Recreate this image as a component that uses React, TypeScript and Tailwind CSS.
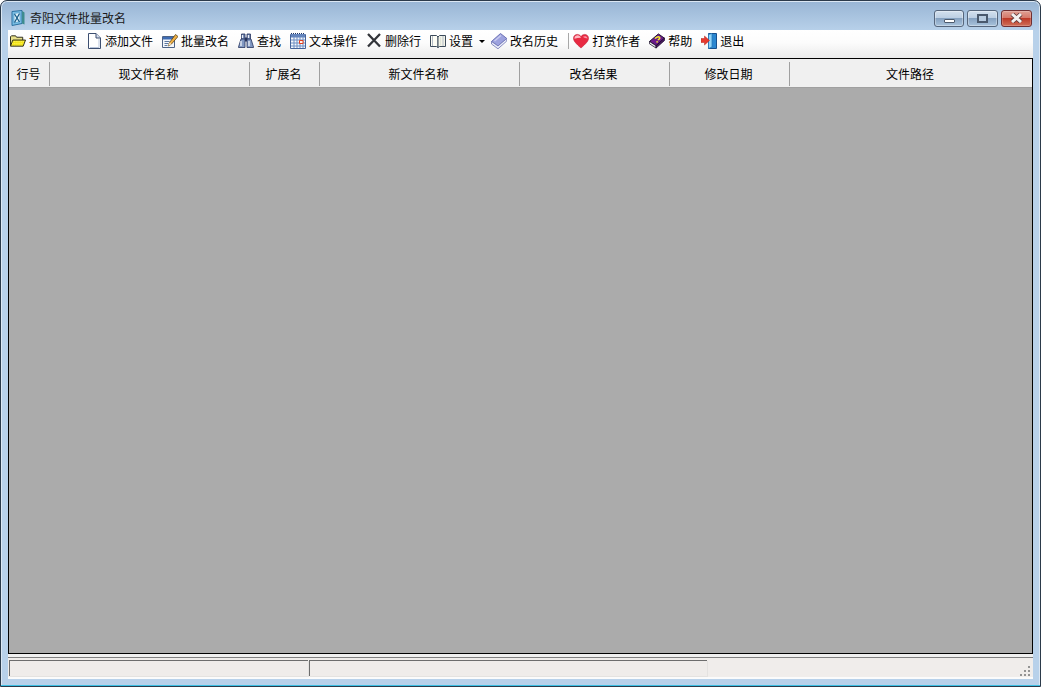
const columns = [
  { name: '行号', width: 'w-[40px]' },
  { name: '现文件名称', width: 'w-[200px]' },
  { name: '扩展名', width: 'w-[70px]' },
  { name: '新文件名称', width: 'w-[200px]' },
  { name: '改名结果', width: 'w-[150px]' },
  { name: '修改日期', width: 'w-[120px]' },
  { name: '文件路径', width: 'flex-1' },
];

function AppIcon() {
  return (
    <svg width="14" height="16" viewBox="0 0 14 16" className="shrink-0">
      <path d="M1 1.500L11 .5v13l-10 2z" fill="#7cc0e6" stroke="#2a6f9f" />
      <path d="M3 3.500l6-1v9l-6 1.500z" fill="#e0f3fb" stroke="#4b97c6" strokeWidth=".7" />
      <path d="M3.500 12.500l5-9M3.500 4l5 8" stroke="#1a5c88" strokeWidth="1.300" fill="none" />
      <path d="M11 1l2.500 1.500v12L11 13.500z" fill="#3d8c8f" />
    </svg>
  );
}

function FolderIcon() {
  return (
    <svg width="17" height="16" viewBox="0 0 17 16">
      <defs>
        <pattern id="folder-dots" width="2" height="2" patternUnits="userSpaceOnUse">
          <rect width="2" height="2" fill="#f2e414" />
          <rect width="1" height="1" fill="#fff36a" />
        </pattern>
      </defs>
      <path d="M.5 13V3.500l1-1h4.500l1 1.500h6.500v3" fill="#e8e08a" stroke="#26261a" />
      <path d="M.5 13.500l2.500-6.500h13.500l-2.500 6.500z" fill="url(#folder-dots)" stroke="#26261a" />
    </svg>
  );
}

function PageIcon() {
  return (
    <svg width="13" height="16" viewBox="0 0 13 16">
      <path d="M.5.5h7.500l4.500 4.500v10.500H.5z" fill="#fff" stroke="#3d4f70" />
      <path d="M8 .5v4.500h4.500" fill="#d5deee" stroke="#3d4f70" />
      <path d="M11 6v8.500H2" fill="none" stroke="#b9c6dc" />
    </svg>
  );
}

function EditIcon() {
  return (
    <svg width="16" height="16" viewBox="0 0 16 16">
      <path d="M.5 3.500h12v11H.5z" fill="#f4f7fb" stroke="#4d6386" />
      <path d="M1 4h11v2.500H1z" fill="#3f6cb3" />
      <path d="M2.500 8.500h5M2.500 10.500h4M2.500 12.500h3" stroke="#5d78a0" />
      <path d="M6.500 13l1-3.500L13.500 1.500 16 3.500 9.500 11z" fill="#f0b044" stroke="#5c4418" strokeWidth=".8" />
      <path d="M6.500 13l1-3.500 2 1.500z" fill="#fbe6c2" />
    </svg>
  );
}

function BinocularsIcon() {
  return (
    <svg width="16" height="16" viewBox="0 0 16 16">
      <path d="M3.500 1h3.500v6H3.500zM9 1h3.500v6H9z" fill="#6d82ad" stroke="#26345e" strokeWidth=".8" />
      <path d="M.5 14l2.500-8h4v8.500H.5zM9 14.500V6h4l2.500 8v.5z" fill="#8198c2" stroke="#26345e" strokeWidth=".8" />
      <path d="M7 4.500h2v4H7z" fill="#26345e" />
      <path d="M4.500 2v3M10.500 2v3M3 8v5M11 8v5" stroke="#eef2f9" strokeWidth="1.300" />
    </svg>
  );
}

function CalendarIcon() {
  return (
    <svg width="16" height="16" viewBox="0 0 16 16">
      <path d="M.5 1.500h15v14H.5z" fill="#f4f7fc" stroke="#45639a" />
      <path d="M1 1h14v3.500H1z" fill="#6384bc" />
      <path d="M1 .5h14" stroke="#1f3564" strokeDasharray="1 1" />
      <path d="M4 4v11M7 4v11M10 4v11M13 4v11M1 7h14M1 10h14M1 13h14" stroke="#6f8ec2" />
      <path d="M9.500 7.500h3.500v3H9.500z" fill="#fff3ee" stroke="#e2401f" />
    </svg>
  );
}

function CrossIcon() {
  return (
    <svg width="16" height="16" viewBox="0 0 16 16">
      <path d="M2 1l12 12.500M14 1L2 13.500" stroke="#33353a" strokeWidth="2.300" />
    </svg>
  );
}

function OpenBookIcon() {
  return (
    <svg width="16" height="16" viewBox="0 0 16 16">
      <path d="M.5 2.500h6l1.500 1.500v10.500l-1.500-1H.5z" fill="#fdfdf5" stroke="#3b4a5a" />
      <path d="M15.500 2.500h-6L8 4v10.500l1.500-1h6z" fill="#f2f3e8" stroke="#3b4a5a" />
      <path d="M2.500 3v10M13 3v10" stroke="#b4bcc6" />
      <path d="M10.500 4v8" stroke="#dfe3d8" />
    </svg>
  );
}

function BlueBookIcon() {
  return (
    <svg width="16" height="16" viewBox="0 0 16 16">
      <path d="M.5 8.500L9.500.5 15.800 5.500 7 13z" fill="#9da2de" stroke="#6d72b4" />
      <path d="M.5 8.500L7 13l8.800-7.500v2.500L7 15.800.5 11z" fill="#eceefa" stroke="#6d72b4" strokeWidth=".8" />
      <path d="M3.500 8L10 2.500" stroke="#c9cbf0" strokeWidth="1.500" />
    </svg>
  );
}

function HeartIcon() {
  return (
    <svg width="17" height="16" viewBox="0 0 17 16">
      <path d="M8.500 15.500C3 10.500.5 8 .5 5 .5 2.500 2.500 1 4.500 1c2 0 3.200 1 4 2.300C9.300 2 10.500 1 12.500 1c2 0 4 1.500 4 4 0 3-2.500 5.500-8 10.500z" fill="#e82a42" stroke="#c0243b" strokeWidth=".6" />
      <path d="M1.500 5.500C1.500 3.200 3.300 2 5 2c1.600 0 2.800 1 3.500 2.500-2.500.2-4.800.5-7 1z" fill="#ffb9c3" />
      <path d="M10.500 3.500c1.500-1 4.500-1 5 1.800-1.800 0-3.600-.8-5-1.800z" fill="#ff93a3" />
    </svg>
  );
}

function HelpBookIcon() {
  return (
    <svg width="17" height="16" viewBox="0 0 17 16">
      <path d="M.5 8.500L10 .5l6.500 4.500-9 8z" fill="#6a1a8a" stroke="#1a0d28" />
      <path d="M.5 8.500l7 4.500v2.500l-7-4.500z" fill="#f2eff4" stroke="#1a0d28" strokeWidth=".8" />
      <path d="M7.500 15.500l9-8V5L7.500 13z" fill="#4b1563" stroke="#1a0d28" strokeWidth=".8" />
      <path d="M6.500 5.500c1.200-2 3.800-2.500 4.800-1.300.7 1-.5 2-2 2.500" fill="none" stroke="#f6ec2e" strokeWidth="1.600" />
      <path d="M8 8.500l1.200.9" stroke="#f6ec2e" strokeWidth="1.600" />
    </svg>
  );
}

function ExitIcon() {
  return (
    <svg width="16" height="16" viewBox="0 0 16 16">
      <path d="M7.500.5h8v15h-8z" fill="#2a86d0" stroke="#174f8c" />
      <path d="M7.500 1.500L11 .5v13.500l-3.500 1.500z" fill="#93d4f7" stroke="#2273b3" strokeWidth=".7" />
      <path d="M0 5.500h3.500V3L8.500 7.500 3.500 12V9.500H0z" fill="#e8392e" stroke="#b0281e" strokeWidth=".5" />
    </svg>
  );
}

function ToolItem({ icon, label }: { icon: React.ReactNode; label: string }) {
  return (
    <div className="flex items-center gap-[3px]">
      <span className="flex w-[16px] justify-center">{icon}</span>
      <span>{label}</span>
    </div>
  );
}

export default function App() {
  return (
    <div className="flex h-[687px] w-[1041px] flex-col overflow-hidden rounded-t-[7px] border border-[#2b3a4a] bg-[linear-gradient(to_bottom,#98b5d4_0px,#b8d1ea_30px,#b8d1ea_100%)] font-['Noto_Sans_CJK_SC',sans-serif] text-[12px] text-black shadow-[inset_0_0_0_1px_#dbe7f3]">
      {/* Title bar */}
      <div className="flex h-[29px] shrink-0 items-center justify-between pl-[10px] pr-[8px] pt-[5px]">
        <div className="flex items-center gap-[5px]">
          <AppIcon />
          <span className="leading-none text-[#1a1a1a]">奇阳文件批量改名</span>
        </div>
        <div className="flex gap-[3px]">
          <button className="flex h-[17px] w-[30px] items-center justify-center rounded-[3px] border border-[#56667c] bg-[linear-gradient(to_bottom,#d3e0ee_0%,#bccfe4_45%,#86a2c1_50%,#a9c3dc_100%)] shadow-[inset_0_0_0_1px_#ffffff55]">
            <span className="mt-[5px] h-[4px] w-[11px] rounded-[1px] border border-[#4d5b6e] bg-white" />
          </button>
          <button className="flex h-[17px] w-[31px] items-center justify-center rounded-[3px] border border-[#56667c] bg-[linear-gradient(to_bottom,#d3e0ee_0%,#bccfe4_45%,#86a2c1_50%,#a9c3dc_100%)] shadow-[inset_0_0_0_1px_#ffffff55]">
            <span className="h-[9px] w-[11px] border-2 border-[#4a596d] bg-[#b9cce0]" />
          </button>
          <button className="flex h-[17px] w-[31px] items-center justify-center rounded-[3px] border border-[#6f2f32] bg-[linear-gradient(to_bottom,#dfa094_0%,#d6796a_45%,#bd3a28_50%,#cf6f58_100%)] shadow-[inset_0_0_0_1px_#ffffff33]">
            <svg width="13" height="10" viewBox="0 0 13 10">
              <path d="M2 1l9 8M11 1L2 9" stroke="#5f3a3a" strokeWidth="4.500" />
              <path d="M2 1l9 8M11 1L2 9" stroke="#f4f1ef" strokeWidth="3" />
            </svg>
          </button>
        </div>
      </div>

      {/* Client area */}
      <div className="mx-[7px] flex min-h-0 flex-1 flex-col bg-[#f0f0f0]">
        <div className="flex h-[28px] shrink-0 items-center gap-[9px] bg-[linear-gradient(to_bottom,#ffffff_0%,#fcfcfc_45%,#ebebeb_100%)] pb-[6px] pl-[2px]">
          <ToolItem icon={<FolderIcon />} label="打开目录" />
          <ToolItem icon={<PageIcon />} label="添加文件" />
          <ToolItem icon={<EditIcon />} label="批量改名" />
          <ToolItem icon={<BinocularsIcon />} label="查找" />
          <ToolItem icon={<CalendarIcon />} label="文本操作" />
          <ToolItem icon={<CrossIcon />} label="删除行" />
          <div className="flex items-center">
            <ToolItem icon={<OpenBookIcon />} label="设置" />
            <span className="ml-[6px] mr-[-3px] h-0 w-0 border-x-[3px] border-t-[3px] border-x-transparent border-t-black" />
          </div>
          <ToolItem icon={<BlueBookIcon />} label="改名历史" />
          <span className="ml-[1px] mr-[-5px] h-[16px] w-px bg-[#a8a8a8]" />
          <ToolItem icon={<HeartIcon />} label="打赏作者" />
          <ToolItem icon={<HelpBookIcon />} label="帮助" />
          <ToolItem icon={<ExitIcon />} label="退出" />
        </div>

        {/* Grid */}
        <div className="flex min-h-0 flex-1 flex-col border border-black bg-[#f0f0f0] pt-[1px]">
          <div className="flex h-[28px] shrink-0 items-center border-b border-[#a0a0a0] pl-[1px]">
            {columns.map((col, i) => (
              <div
                key={col.name}
                className={`flex h-[24px] items-center justify-center pr-[2px] ${col.width} ${i < columns.length - 1 ? 'border-r border-[#a0a0a0]' : ''}`}
              >
                {col.name}
              </div>
            ))}
          </div>
          <div className="flex-1 bg-[#ababab]" />
        </div>

        {/* Status bar */}
        <div className="relative mt-[3px] flex h-[22px] shrink-0 gap-[1px] border-t border-[#808080] bg-[#f0edeb] pl-[1px] pt-[2px] shadow-[inset_0_-2px_0_#fbfbfb]">
          <div className="h-[16px] w-[299px] border-l border-t border-[#6d6d6d] bg-[#efecea] shadow-[1px_1px_0_#e4e2e0]" />
          <div className="h-[16px] w-[398px] border-l border-t border-[#6d6d6d] bg-[#efecea] shadow-[1px_1px_0_#e4e2e0]" />
          <svg width="10" height="10" viewBox="0 0 10 10" className="absolute bottom-[3px] right-[3px]">
            <path d="M8 0h2v2H8zM4 4h2v2H4zM8 4h2v2H8zM0 8h2v2H0zM4 8h2v2H4zM8 8h2v2H8z" fill="#949494" />
          </svg>
        </div>
      </div>

      <div className="h-[7px] shrink-0 border-b border-[#3cc0e4]" />
    </div>
  );
}
